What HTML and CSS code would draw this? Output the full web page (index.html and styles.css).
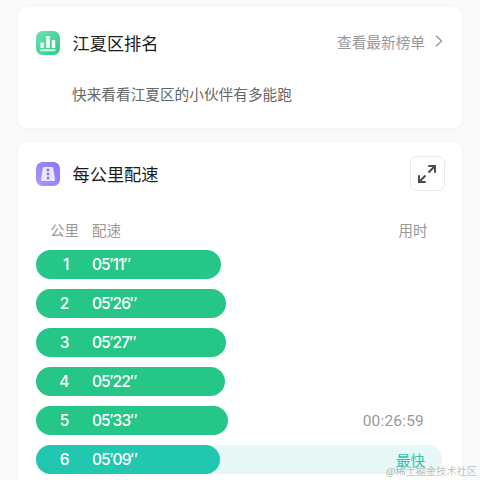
FILE: index.html
```html
<!DOCTYPE html>
<html lang="zh-CN">
<head>
<meta charset="utf-8">
<title>每公里配速</title>
<link rel="stylesheet" href="styles.css">
</head>
<body>
<main class="page">
  <section class="card rank">
    <header class="card-head">
      <svg class="badge" viewBox="0 0 24 24">
        <defs><linearGradient id="g" x1="0" y1="0" x2="1" y2="1"><stop offset="0" stop-color="#6de0b0"/><stop offset="1" stop-color="#30ca8b"/></linearGradient></defs>
        <rect width="24" height="24" rx="6.5" fill="url(#g)"/>
        <path d="M4.500 11.500h3.400V17H4.500zM10.200 5h3.600v12h-3.600zM15.800 9h3.400v8h-3.400z" fill="#f4fffa"/>
        <rect x="4.200" y="18.300" width="15.400" height="1.900" rx=".9" fill="#d8f8ea"/>
      </svg>
      <h2 class="title">江夏区排名</h2>
      <a class="more">查看最新榜单
        <svg class="chevron" viewBox="0 0 8 12"><path d="M1 .8 6.500 6 1 11.200"/></svg>
      </a>
    </header>
    <p class="desc">快来看看江夏区的小伙伴有多能跑</p>
  </section>

  <section class="card pace">
    <header class="card-head">
      <svg class="badge" viewBox="0 0 24 24">
        <defs><linearGradient id="v" x1="0" y1="1" x2="1" y2="0"><stop offset="0" stop-color="#a69bfb"/><stop offset="1" stop-color="#8875f5"/></linearGradient></defs>
        <rect width="24" height="24" rx="6.5" fill="url(#v)"/>
        <path d="M8 5h8a1.200 1.200 0 0 1 1.200 1l1.800 11.500a1.300 1.300 0 0 1-1.300 1.500H6.300a1.300 1.300 0 0 1-1.300-1.500L6.800 6A1.200 1.200 0 0 1 8 5z" fill="#ece9ff"/>
        <path d="M10.700 6.700h2.600v2.500h-2.600zM10.700 10.700h2.600v2.500h-2.600zM10.700 14.700h2.600v2.500h-2.600z" fill="#8276df"/>
      </svg>
      <h2 class="title">每公里配速</h2>
      <button class="expand" aria-label="展开">
        <svg viewBox="0 0 20 20"><path d="M11.500 8.500 17.500 2.500M11.300 2h6.700v6.700M8.500 11.500 2.500 17.500M2 11.300v6.700h6.700"/></svg>
      </button>
    </header>
    <div class="labels"><span class="km">公里</span><span>配速</span><span class="time">用时</span></div>
    <div class="rows">
      <div class="row"><div class="bar" style="width:185.500px"><span class="num">1</span><span>05′11″</span></div></div>
      <div class="row"><div class="bar" style="width:190px"><span class="num">2</span><span>05′26″</span></div></div>
      <div class="row"><div class="bar" style="width:190.500px"><span class="num">3</span><span>05′27″</span></div></div>
      <div class="row"><div class="bar" style="width:189px"><span class="num">4</span><span>05′22″</span></div></div>
      <div class="row"><div class="bar" style="width:192.500px"><span class="num">5</span><span>05′33″</span></div><span class="elapsed">00:26:59</span></div>
      <div class="row fastest"><div class="bar" style="width:184.500px"><span class="num">6</span><span>05′09″</span></div><span class="elapsed">最快</span></div>
    </div>
  </section>
  <div class="watermark">@稀土掘金技术社区</div>
</main>
</body>
</html>
```
FILE: styles.css
```css
* { box-sizing: border-box; }
body {
  margin: 0;
  background: #fafafa;
  font-family: Roboto, "Noto Sans CJK SC", sans-serif;
  color: #1b1b1b;
}
.page {
  position: relative;
  height: 480px;
  overflow: hidden;
  padding: 7px 18px 0;
}
.card {
  background: #fff;
  border-radius: 9px;
  padding: 0 18px 0 17.500px;
  box-shadow: 0 1px 6px rgba(0, 0, 0, .035);
}
.rank { height: 121px; margin-bottom: 14px; padding-top: 18px; }
.pace { height: 360px; padding-top: 14px; }
.card-head { display: flex; align-items: center; height: 36px; }
.badge { width: 24px; height: 24px; flex: none; }
.title {
  margin: 0 0 0 13px;
  padding-top: 1px;
  font-size: 17.200px;
  line-height: 26px;
  font-weight: 400;
}
.more {
  display: flex;
  align-items: center;
  margin: -4px 1px 0 auto;
  color: #999;
  font-size: 14.670px;
}
.chevron { width: 8px; height: 12px; margin-left: 10px; }
.chevron path { fill: none; stroke: #999; stroke-width: 1.400; }
.desc {
  margin: 23px 0 0 36.500px;
  font-size: 14.670px;
  line-height: 22px;
  color: #666;
}
.expand {
  display: grid;
  place-items: center;
  width: 35px;
  height: 35px;
  margin: -1px -.5px 0 auto;
  padding: 0;
  border: 1px solid #e8e8e8;
  border-radius: 7px;
  background: #fff;
}
.expand svg { width: 20px; height: 20px; }
.expand path { fill: none; stroke: #4c4c4c; stroke-width: 2; }
.labels {
  display: flex;
  margin: 29px 0 7px;
  padding: 0 16.500px 0 14.500px;
  font-size: 14.500px;
  line-height: 22px;
  color: #999;
}
.km { width: 42px; }
.time { margin-left: auto; }
.rows { display: grid; gap: 10px; width: 406.500px; }
.row {
  display: flex;
  align-items: center;
  justify-content: space-between;
  height: 29px;
  padding-right: 18px;
  border-radius: 15px;
}
.bar {
  display: flex;
  align-items: center;
  height: 29px;
  border-radius: 15px;
  background: #26c688;
  color: #fff;
  font-family: Inter, sans-serif;
  font-size: 15.500px;
  font-weight: 500;
  letter-spacing: -.9px;
}
.num { width: 33px; margin-right: 23.500px; text-align: right; }
.elapsed { color: #999; font-size: 15.500px; letter-spacing: .2px; }
.fastest { padding-right: 17px; background: #e8f8f6; }
.fastest .bar { background: #22c7b0; }
.fastest .elapsed { color: #27c6b0; font-size: 14.500px; letter-spacing: 0; }
.watermark {
  position: absolute;
  right: 3px;
  bottom: 1px;
  font: 300 10.200px/15px "Liberation Serif", "Noto Sans CJK SC", serif;
  color: #a5a9a9;
}
```
